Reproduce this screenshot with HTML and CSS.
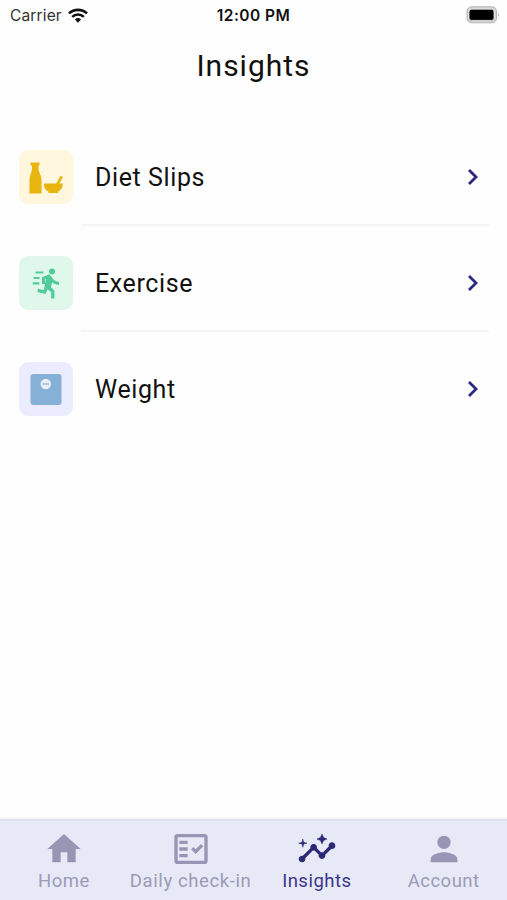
FILE: index.html
```html
<!DOCTYPE html>
<html lang="en">
<head>
<meta charset="utf-8">
<title>Insights</title>
<link rel="stylesheet" href="styles.css">
</head>
<body>
<div class="app">
  <header class="status">
    <div class="carrier"><span class="carrier-name">Carrier</span>
      <svg class="wifi" viewBox="0 0 20 15"><path d="M1 5.4a13 13 0 0 1 18 0" fill="none" stroke="#111" stroke-width="2.7"/><path d="M4.2 8.8a8.3 8.3 0 0 1 11.6 0" fill="none" stroke="#111" stroke-width="2.5"/><path d="M6.9 11.4a4.6 4.6 0 0 1 6.2 0L10 14.7z" fill="#111"/></svg>
    </div>
    <div class="time">12:00 PM</div>
    <svg class="battery" viewBox="0 0 34 18"><rect x="1" y=".8" width="29.5" height="16" rx="4.5" fill="#d4d4d4" stroke="#b4b4b4"/><rect x="3" y="3.2" width="25" height="11.2" rx="2.5" fill="#000" stroke="#f2f2f2" stroke-width=".8"/><path d="M32 6.5q1.7 2.3 0 4.6z" fill="#aaa"/></svg>
  </header>
  <h1 class="title"><span>Insights</span></h1>
  <main class="list">
    <a class="row">
      <span class="tile diet"><svg viewBox="0 0 54 54"><path d="M11.500 12.500h9v2.500l-1 .8v3.500c0 3 3 6 3 10V43.500H10.500V29.300c0-4 2.500-7 2.500-10v-3.500l-1.500-.8zM25 33.500h12.300l3.700-7q1.500-1 2.800.4l-3.500 6.600H43.800c0 4.200-1.800 6.700-4.500 7.700v1.800h-10v-1.800c-3-1-4.500-3.500-4.300-7.700z" fill="#e8b40e"/></svg></span>
      <span class="label">Diet Slips</span>
      <svg class="chevron" viewBox="0 0 12 18"><path d="M2 2l7 7-7 7"/></svg>
    </a>
    <a class="row">
      <span class="tile exercise"><svg viewBox="0 0 54 54"><circle cx="33" cy="15.500" r="3" fill="#52cb9a"/><g fill="none" stroke="#52cb9a"><path d="M16.500 16.500h8M14.700 22h5.800M13.800 27.300h6.500" stroke-width="2.200"/><path d="M24.500 28v-5.700l5.200-2.200 3.800 4.700q2.300 2.500 6.500 2.800" stroke-width="3"/><path d="M29.800 31.500l4 4v7M27.500 31.500l-2 4.500-6.800-1.700" stroke-width="3.300"/></g><path d="M27.500 20l4.300-.3 2 3.500-2 8.300 1.500 2-2.500 1.300-5.500-3.300z" fill="#52cb9a"/></svg></span>
      <span class="label">Exercise</span>
      <svg class="chevron" viewBox="0 0 12 18"><path d="M2 2l7 7-7 7"/></svg>
    </a>
    <a class="row">
      <span class="tile weight"><svg viewBox="0 0 54 54"><rect x="11.500" y="12" width="31" height="31" rx="3" fill="#86b0d5"/><circle cx="26.800" cy="22" r="5.300" fill="#e9edfc"/><path d="M23.500 22h6.600" fill="none" stroke="#a9c2df" stroke-width="1.700"/></svg></span>
      <span class="label">Weight</span>
      <svg class="chevron" viewBox="0 0 12 18"><path d="M2 2l7 7-7 7"/></svg>
    </a>
  </main>
  <nav class="tabs">
    <a class="tab"><svg viewBox="0 0 24 24"><path d="M10 20v-6h4v6h5v-8h3L12 3 2 12h3v8z"/></svg><span>Home</span></a>
    <a class="tab"><svg viewBox="0 0 24 24"><path fill-rule="evenodd" d="M20 3H4a2 2 0 0 0-2 2v14a2 2 0 0 0 2 2h16a2 2 0 0 0 2-2V5a2 2 0 0 0-2-2zm0 16H4V5h16z"/><path d="M19.410 10.420 17.990 9l-3.170 3.170-1.410-1.420L12 12.160 14.820 15zM5 7h5v2H5zM5 11h5v2H5zM5 15h5v2H5z"/></svg><span class="checkin">Daily check-in</span></a>
    <a class="tab active"><svg viewBox="0 0 24 24"><path d="M21 8c-1.450 0-2.260 1.440-1.930 2.510l-3.550 3.560c-.3-.09-.74-.09-1.040 0l-2.550-2.550C12.270 10.450 11.460 9 10 9c-1.450 0-2.270 1.440-1.930 2.520l-4.560 4.550C2.440 15.740 1 16.550 1 18c0 1.100.9 2 2 2 1.450 0 2.260-1.440 1.930-2.510l4.550-4.560c.3.09.74.09 1.040 0l2.550 2.550C12.730 16.550 13.540 18 15 18c1.450 0 2.270-1.440 1.930-2.520l3.560-3.550c1.070.33 2.510-.48 2.510-1.930 0-1.100-.9-2-2-2z"/><path d="M15 9l.94-2.070L18 6l-2.060-.93L15 3l-.92 2.070L12 6l2.080.93zM3.500 11L4 9l2-.5L4 8l-.5-2L3 8l-2 .5L3 9z" stroke="#2b2874" stroke-width=".3"/></svg><span>Insights</span></a>
    <a class="tab"><svg viewBox="0 0 24 24"><path d="M12 12a4 4 0 1 0 0-8 4 4 0 0 0 0 8zm0 2c-2.670 0-8 1.340-8 4v2h16v-2c0-2.660-5.330-4-8-4z"/></svg><span>Account</span></a>
  </nav>
</div>
</body>
</html>
```

FILE: styles.css
```css
* { box-sizing: border-box; }
body { margin: 0; background: #fefefe; color: #111; font-family: Roboto, "Liberation Sans", sans-serif; }
.app { height: 900px; display: flex; flex-direction: column; overflow: hidden; }
.status { height: 30px; display: grid; grid-template-columns: 1fr auto 1fr; align-items: center; padding: 0 7px 0 10px; font-family: Inter, sans-serif; font-size: 15.5px; line-height: 30px; }
.carrier { display: flex; align-items: center; gap: 6px; color: #333; }
.carrier-name { letter-spacing: .15px; }
.wifi { width: 20px; height: 15px; margin-top: -1px; }
.time { font-weight: 600; font-size: 15.500px; letter-spacing: .45px; margin: 1px 3px 0 0; }
.battery { width: 34px; height: 18px; justify-self: end; margin-top: -2px; }
.title { margin: 15px 0 0; height: 42px; line-height: 42px; text-align: center; font-size: 30px; font-weight: 400; letter-spacing: 1px; }
.list { flex: 1; padding: 44px 18px 0 19px; }
.row { display: grid; grid-template-columns: 62px 1fr 22px; height: 106px; align-items: center; padding-bottom: 15px; position: relative; }
.row:not(:last-child)::after { content: ""; position: absolute; left: 62px; right: 0; bottom: 11px; height: 2px; background: #f5f5f6; }
.tile { width: 54px; height: 54px; border-radius: 9px; }
.tile svg { display: block; width: 54px; height: 54px; }
.diet { background: #fff6de; }
.exercise { background: #e0f8eb; }
.weight { background: #ebecff; }
.label { padding: 3px 0 0 14px; font-size: 25px; line-height: 34px; letter-spacing: .6px; white-space: nowrap; }
.chevron { width: 12px; height: 18px; }
.chevron path { fill: none; stroke: #2b2880; stroke-width: 2.8; }
.tabs { height: 81px; flex: none; display: grid; grid-template-columns: repeat(4, 1fr); background: #e8e9f7; border-top: 2px solid #dddeea; box-shadow: 0 -1px 2px #eee; }
.tab { display: flex; flex-direction: column; align-items: center; padding: 8px 0 0 1px; color: #9a9bb6; font-size: 18.500px; line-height: 24px; letter-spacing: .5px; white-space: nowrap; }
.tab svg { width: 40px; height: 40px; fill: #9796b4; }
.checkin { letter-spacing: .6px; }
.active { color: #39368a; padding-left: 0; }
.active svg { fill: #2b2874; }
.tab:last-child { padding-left: 0; }
```
